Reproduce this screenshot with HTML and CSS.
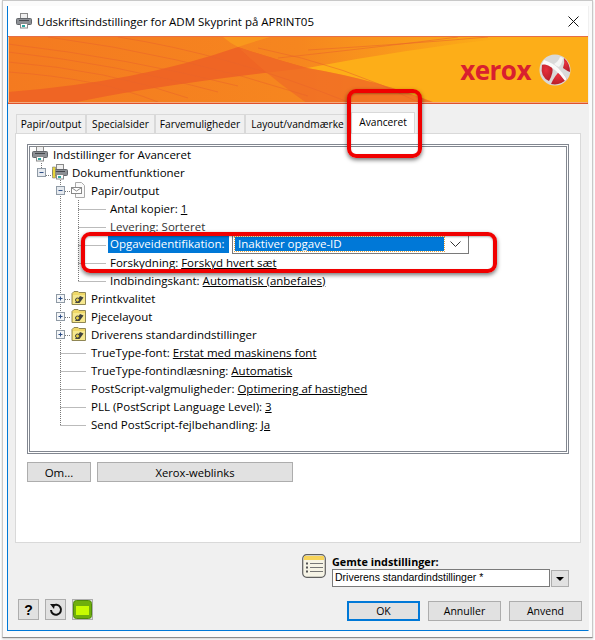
FILE: index.html
```html
<!DOCTYPE html>
<html lang="da">
<head>
  <meta charset="UTF-8" />
  <title>Udskriftsindstillinger</title>
  <link rel="stylesheet" href="styles.css">
</head>
<body>
  <svg class="defs" width="0" height="0">
    <defs>
      <g id="folder">
        <path d="M1 3.500l2-2h4l1 1h6.500v12H1z" fill="#efd868" stroke="#8f8654"/>
        <rect x="2" y="5" width="12" height="9" fill="#f6e88e"/>
        <path d="M4 13l5-7 3.500 1.500-4 5.500z" fill="#3f4240"/>
        <circle cx="6.500" cy="10" r="2" fill="#e9d23c" stroke="#444"/>
      </g>
      <g id="plus">
        <rect x=".5" y=".5" width="8" height="8" fill="#f4f6f8" stroke="#8f9aa5"/>
        <path d="M2.500 4.500h4M4.500 2.500v4" stroke="#2f4f86"/>
      </g>
      <g id="minus">
        <rect x=".5" y=".5" width="8" height="8" fill="#e6eaef" stroke="#8f9aa5"/>
        <path d="M2.500 4.500h4" stroke="#2f4f86"/>
      </g>
      <g id="printer">
        <rect x="4.500" y=".5" width="7" height="5" fill="#f0f0f0" stroke="#8a8a8a"/>
        <rect x=".5" y="5.500" width="15" height="6" rx="1" fill="#8d9095" stroke="#63666b"/>
        <rect x="3" y="7" width="10" height="1" fill="#44474c"/>
        <rect x="4.500" y="10.500" width="7" height="4.500" fill="#fff" stroke="#8a8a8a"/>
        <rect x="6" y="12" width="3" height="2" fill="#2aa7a0"/>
      </g>
    </defs>
  </svg>

  <div class="shot">
    <div class="window">
      <div class="titlebar">
        <svg class="title-icon" width="16" height="16" viewBox="0 0 16 16"><use href="#printer"/></svg>
        <span class="title-text">Udskriftsindstillinger for ADM Skyprint på APRINT05</span>
        <svg class="close" width="11" height="11" viewBox="0 0 11 11"><path d="M.5.5l10 10M10.500.5l-10 10" stroke="#111" fill="none"/></svg>
      </div>

      <div class="banner">
        <svg class="banner-art" width="580" height="68" viewBox="0 0 580 68">
          <defs>
            <linearGradient id="sky" x1="0" x2="1" y1="0" y2="0">
              <stop offset="0" stop-color="#f47a20"/>
              <stop offset=".5" stop-color="#f6861f"/>
              <stop offset=".9" stop-color="#fdb316"/>
            </linearGradient>
            <radialGradient id="ball" cx=".4" cy=".35" r=".75">
              <stop offset="0" stop-color="#e8303c"/>
              <stop offset="1" stop-color="#b01c28"/>
            </radialGradient>
          </defs>
          <rect width="580" height="68" fill="url(#sky)"/>
          <path d="M299 32Q400 13 505 1H580V68H430Q370 44 299 32Z" fill="#fdae18"/>
          <path d="M215 1H262Q245 6 230 11Q222 7 215 1Z" fill="#f9981d"/>
          <path d="M0 56Q130 46 230 11Q262 22 299 32Q140 50 60 68H0Z" fill="#ef6524"/>
          <path d="M230 11Q262 22 299 32Q370 44 430 68H300Q260 40 230 11Z" fill="#f06d25" opacity=".8"/>
          <g fill="none" stroke="#e9642a" stroke-opacity=".55">
            <path d="M0 8Q120 22 230 50"/>
            <path d="M0 16Q110 28 210 56"/>
            <path d="M0 26Q100 34 180 62"/>
            <path d="M0 36Q90 42 150 66"/>
            <path d="M40 1Q170 18 300 60"/>
            <path d="M110 1Q220 18 340 66"/>
            <path d="M250 12Q340 30 410 66"/>
            <path d="M300 14Q400 8 480 1"/>
            <path d="M270 22Q380 10 450 1"/>
          </g>
          <path d="M.5.5H579.5M.5 66.500H579.5M.5.5V66.500" fill="none" stroke="#fbc79a"/>
          <path d="M0 0H580M0 67.500H580" fill="none" stroke="#e0522a" stroke-width="1.400"/>
        </svg>
        <span class="brand">xerox</span>
        <svg class="globe" width="32" height="32" viewBox="0 0 32 32">
          <circle cx="16" cy="16" r="15.500" fill="#d9d9d9"/>
          <path d="M3 11Q9 8 13 13Q15 18 10 27Q1 23 3 11Z" fill="url(#ball)"/>
          <path d="M12 30Q16 21 21 17Q25 21 28 25Q21 32 12 30Z" fill="url(#ball)"/>
          <path d="M24 14Q26 9 25 4Q31 9 31 18Q28 17 24 14Z" fill="url(#ball)"/>
          <path d="M15 10Q19 8 21 3Q23 3 24 4Q23 10 20 13Q17 12 15 10Z" fill="#f5f5f5"/>
          <path d="M5 6Q14 9 19 14Q24 19 28 25L26 27Q21 20 16 16Q9 10 3 10Z" fill="#fafafa"/>
        </svg>
      </div>

      <div class="tabs">
        <div class="tab tab-paper">Papir/output</div>
        <div class="tab tab-special">Specialsider</div>
        <div class="tab tab-color">Farvemuligheder</div>
        <div class="tab tab-layout">Layout/vandmærke</div>
        <div class="tab tab-active">Avanceret</div>
      </div>

      <div class="panel">
        <div class="tree">
          <svg class="tree-lines" width="100" height="290" viewBox="0 0 100 290">
            <path fill="none" stroke="#777" stroke-dasharray="1 1" d="M13.500 18V26M18 30.500H24M32.500 35V280.500M37 46.500H43M32.500 208.500H58M32.500 226.500H58M32.500 244.500H58M32.500 262.500H58M32.500 280.500H58M37 154.500H43M37 172.500H43M37 190.500H43M50.500 55V136.500M50.500 64.500H78M50.500 82.500H78M50.500 100.500H78M50.500 118.500H78M50.500 136.500H78"/>
          </svg>
          <div class="row lvl0"><svg class="node" width="16" height="16" viewBox="0 0 16 16"><use href="#printer"/></svg><span>Indstillinger for Avanceret</span></div>
          <div class="row lvl1"><svg class="box" width="9" height="9" viewBox="0 0 9 9"><use href="#minus"/></svg><svg class="node" width="16" height="16" viewBox="0 0 16 16"><use href="#printer"/><path d="M.5 3h3v11h-3z" fill="#e8d63a" stroke="#777" stroke-width=".6"/></svg><span>Dokumentfunktioner</span></div>
          <div class="row lvl2"><svg class="box" width="9" height="9" viewBox="0 0 9 9"><use href="#minus"/></svg><svg class="node" width="16" height="16" viewBox="0 0 16 16"><path d="M4.500.5h6l3 3v12h-9z" fill="#fafafa" stroke="#aaa"/><rect x=".5" y="5.500" width="10" height="6" fill="#fff" stroke="#888"/><path d="M1 6l4.500 3L10 6" fill="none" stroke="#888"/></svg><span>Papir/output</span></div>
          <div class="row lvl3"><span>Antal kopier: <u>1</u></span></div>
          <div class="row lvl3 row-muted"><span>Levering: <u>Sorteret</u></span></div>
          <div class="row lvl3">
            <span class="selected">Opgaveidentifikation:</span>
            <div class="combo"><span class="combo-value">Inaktiver opgave-ID</span><svg class="combo-arrow" width="11" height="6" viewBox="0 0 11 6"><path d="M.5.5l5 5 5-5" fill="none" stroke="#333"/></svg></div>
          </div>
          <div class="row lvl3"><span>Forskydning: <u>Forskyd hvert sæt</u></span></div>
          <div class="row lvl3"><span>Indbindingskant: <u>Automatisk (anbefales)</u></span></div>
          <div class="row lvl2"><svg class="box" width="9" height="9" viewBox="0 0 9 9"><use href="#plus"/></svg><svg class="node" width="16" height="16" viewBox="0 0 16 16"><use href="#folder"/></svg><span>Printkvalitet</span></div>
          <div class="row lvl2"><svg class="box" width="9" height="9" viewBox="0 0 9 9"><use href="#plus"/></svg><svg class="node" width="16" height="16" viewBox="0 0 16 16"><use href="#folder"/></svg><span>Pjecelayout</span></div>
          <div class="row lvl2"><svg class="box" width="9" height="9" viewBox="0 0 9 9"><use href="#plus"/></svg><svg class="node" width="16" height="16" viewBox="0 0 16 16"><use href="#folder"/></svg><span>Driverens standardindstillinger</span></div>
          <div class="row lvl2b"><span>TrueType-font: <u>Erstat med maskinens font</u></span></div>
          <div class="row lvl2b"><span>TrueType-fontindlæsning: <u>Automatisk</u></span></div>
          <div class="row lvl2b"><span>PostScript-valgmuligheder: <u>Optimering af hastighed</u></span></div>
          <div class="row lvl2b"><span>PLL (PostScript Language Level): <u>3</u></span></div>
          <div class="row lvl2b"><span>Send PostScript-fejlbehandling: <u>Ja</u></span></div>
        </div>
        <div class="panel-buttons">
          <button class="btn btn-about">Om...</button>
          <button class="btn btn-links">Xerox-weblinks</button>
        </div>
      </div>

      <div class="saved">
        <svg class="saved-icon" width="24" height="24" viewBox="0 0 24 24">
          <rect x=".7" y=".7" width="22.600" height="22.600" rx="4" fill="#f6f4e6" stroke="#5f5f5f" stroke-width="1.200"/>
          <path d="M2 2h20v4H2z" fill="#f7d45a"/>
          <path d="M8 9.500h13M8 13.500h13M8 17.500h13" stroke="#777"/>
          <path d="M4 9.500h2M4 13.500h2M4 17.500h2" stroke="#555" stroke-width="2"/>
        </svg>
        <div class="saved-field">
          <label class="saved-label">Gemte indstillinger:</label>
          <div class="saved-row">
            <div class="saved-input">Driverens standardindstillinger *</div>
            <div class="saved-drop"><span class="drop-tri"></span></div>
          </div>
        </div>
      </div>

      <div class="footer">
        <div class="tools">
          <button class="tool tool-help">?</button>
          <button class="tool">
            <svg width="14" height="14" viewBox="0 0 14 14"><path d="M3.500 3.200A5 5 0 1 1 2 7" fill="none" stroke="#111" stroke-width="2"/><path d="M1 1l5 0-1 5z" fill="#111"/></svg>
          </button>
          <button class="tool tool-green">
            <svg width="19" height="19" viewBox="0 0 19 19"><rect x=".5" y=".5" width="18" height="18" rx="3" fill="#6fae0c" stroke="#4f8a08"/><rect x="3" y="6" width="13" height="9" fill="#c8fb02"/></svg>
          </button>
        </div>
        <div class="actions">
          <button class="btn btn-wide btn-default">OK</button>
          <button class="btn btn-wide">Annuller</button>
          <button class="btn btn-wide">Anvend</button>
        </div>
      </div>
    </div>
  </div>

  <!-- red callouts drawn over the screenshot -->
  <div class="callout callout-tab"></div>
  <div class="callout callout-row"></div>
</body>
</html>
```

FILE: styles.css
```css
html, body {
  margin: 0;
  padding: 0;
}
body {
  position: relative;
  width: 595px;
  height: 640px;
  overflow: hidden;
  background-color: #fff;
  font-family: 'Open Sans', sans-serif;
  font-size: 11.5px;
  color: #000;
}
.defs {
  position: absolute;
}
.shot {
  box-sizing: border-box;
  width: 591px;
  height: 638px;
  margin-left: 2px;
  padding: 5px 0 0 4px;
  background-color: #fbfbfb;
  border: 1px solid #c8c8c8;
  border-bottom-color: #8c8c8c;
  box-shadow: 0 1px 2px rgba(0, 0, 0, 0.2);
}
.window {
  box-sizing: border-box;
  width: 582px;
  height: 625px;
  background-color: #f0f0f0;
  border-left: 1px solid #0078d7;
  border-right: 1px solid #f0f0f0;
  border-bottom: 1px solid #0078d7;
}
.titlebar {
  display: flex;
  align-items: center;
  height: 30px;
  padding-left: 8px;
  background-color: #fff;
}
.title-icon {
  margin-right: 5px;
}
.title-text {
  flex: 1;
}
.close {
  margin-right: 9px;
}
.banner {
  position: relative;
  display: flex;
  align-items: center;
  justify-content: flex-end;
  height: 68px;
  padding-right: 17px;
}
.banner-art {
  position: absolute;
  left: 0;
  top: 0;
}
.brand {
  position: relative;
  margin-right: 8px;
  font-size: 26px;
  font-weight: 700;
  line-height: 26px;
  letter-spacing: -0.5px;
  color: #d8202f;
}
.globe {
  position: relative;
}
.tabs {
  display: flex;
  align-items: flex-end;
  height: 29px;
  padding-left: 8px;
  font-size: 10.2px;
}
.tab {
  box-sizing: border-box;
  height: 19px;
  line-height: 19px;
  text-align: center;
  white-space: nowrap;
  background-color: #f0f0f0;
  border: 1px solid #d9d9d9;
  border-bottom: 0;
}
.tab-paper {
  width: 70px;
}
.tab-special {
  width: 69px;
}
.tab-color {
  width: 90px;
}
.tab-layout {
  width: 105px;
}
.tab-active {
  position: relative;
  width: 64px;
  height: 22px;
  margin: 0 0 -1px 1px;
  line-height: 19px;
  background-color: #fff;
  border-bottom: 0;
}
.panel {
  position: relative;
  box-sizing: border-box;
  height: 410px;
  margin: 0 7px;
  padding: 10px 11px;
  background-color: #fff;
  border: 1px solid #d9d9d9;
}
.tree {
  position: relative;
  box-sizing: border-box;
  height: 310px;
  background-color: #fff;
  border: 1px solid #828790;
  outline: 1px solid #828790;
  outline-offset: -3px;
}
.tree-lines {
  position: absolute;
  left: 0;
  top: 0;
}
.row {
  position: relative;
  display: flex;
  align-items: center;
  height: 18px;
  white-space: nowrap;
}
.row u {
  text-underline-offset: 1px;
}
.node {
  margin-right: 4px;
  flex: none;
}
.box {
  margin-right: 6px;
  flex: none;
}
.lvl0 {
  padding-left: 4px;
}
.lvl0 .node {
  margin-right: 5px;
}
.lvl1 {
  padding-left: 9px;
}
.lvl2 {
  padding-left: 28px;
}
.lvl2b {
  padding-left: 63px;
}
.lvl3 {
  padding-left: 82px;
}
.row-muted {
  color: #333;
}
.selected {
  box-sizing: border-box;
  width: 121px;
  height: 18px;
  margin-left: -2px;
  line-height: 17px;
  padding-left: 2px;
  background-color: #0078d7;
  color: #fff;
}
.combo {
  display: flex;
  align-items: center;
  box-sizing: border-box;
  width: 237px;
  height: 20px;
  margin-left: 3px;
  padding: 2px;
  background-color: #fff;
  border: 1px solid #7a7a7a;
}
.combo-value {
  flex: 1;
  height: 14px;
  line-height: 13px;
  padding-left: 3px;
  background-color: #0078d7;
  color: #fff;
  outline: 1px dotted #e8a33d;
}
.combo-arrow {
  margin: 0 5px 0 6px;
}
.panel-buttons {
  display: flex;
  gap: 6px;
  margin-top: 8px;
}
.btn {
  box-sizing: border-box;
  height: 20px;
  padding: 0;
  background-color: #e1e1e1;
  border: 1px solid #adadad;
  font: inherit;
  color: #000;
}
.btn-about {
  width: 64px;
}
.btn-links {
  width: 196px;
  font-size: 11.2px;
}
.saved {
  box-sizing: border-box;
  display: flex;
  align-items: flex-start;
  height: 56px;
  padding: 11px 0 0 294px;
}
.saved-icon {
  margin-right: 6px;
}
.saved-label {
  display: block;
  height: 15px;
  line-height: 15px;
  font-size: 10.8px;
  font-weight: 700;
}
.saved-row {
  display: flex;
  gap: 1px;
}
.saved-input {
  box-sizing: border-box;
  width: 218px;
  height: 18px;
  line-height: 15px;
  padding-left: 2px;
  font-family: 'Liberation Sans', sans-serif;
  font-size: 10.5px;
  background-color: #fff;
  border: 1px solid #7a7a7a;
}
.saved-drop {
  display: flex;
  align-items: center;
  justify-content: center;
  box-sizing: border-box;
  width: 18px;
  height: 17px;
  margin-top: 1px;
  background-color: #e1e1e1;
  border: 1px solid #adadad;
}
.drop-tri {
  width: 0;
  height: 0;
  border: 4px solid transparent;
  border-top: 4px solid #000;
  border-bottom: 0;
}
.footer {
  display: flex;
  justify-content: space-between;
  padding: 0 6px 0 10px;
}
.tools {
  display: flex;
  gap: 6px;
}
.tool {
  display: flex;
  align-items: center;
  justify-content: center;
  box-sizing: border-box;
  width: 21px;
  height: 21px;
  padding: 0;
  background-color: #e1e1e1;
  border: 1px solid #adadad;
}
.tool-help {
  font-family: 'Liberation Sans', sans-serif;
  font-size: 14px;
  font-weight: 700;
}
.actions {
  display: flex;
  gap: 8px;
  padding-top: 2px;
  font-size: 10.5px;
}
.btn-wide {
  width: 73px;
}
.btn-default {
  border: 2px solid #0078d7;
}
.callout {
  position: absolute;
  box-sizing: border-box;
  border: 4px solid #f00000;
  border-radius: 9px;
  box-shadow: 0 2px 4px rgba(0, 0, 0, 0.55), inset 0 1px 2px rgba(0, 0, 0, 0.3);
}
.callout-tab {
  left: 347px;
  top: 89px;
  width: 75px;
  height: 69px;
}
.callout-row {
  left: 81px;
  top: 232px;
  width: 416px;
  height: 41px;
}
```
